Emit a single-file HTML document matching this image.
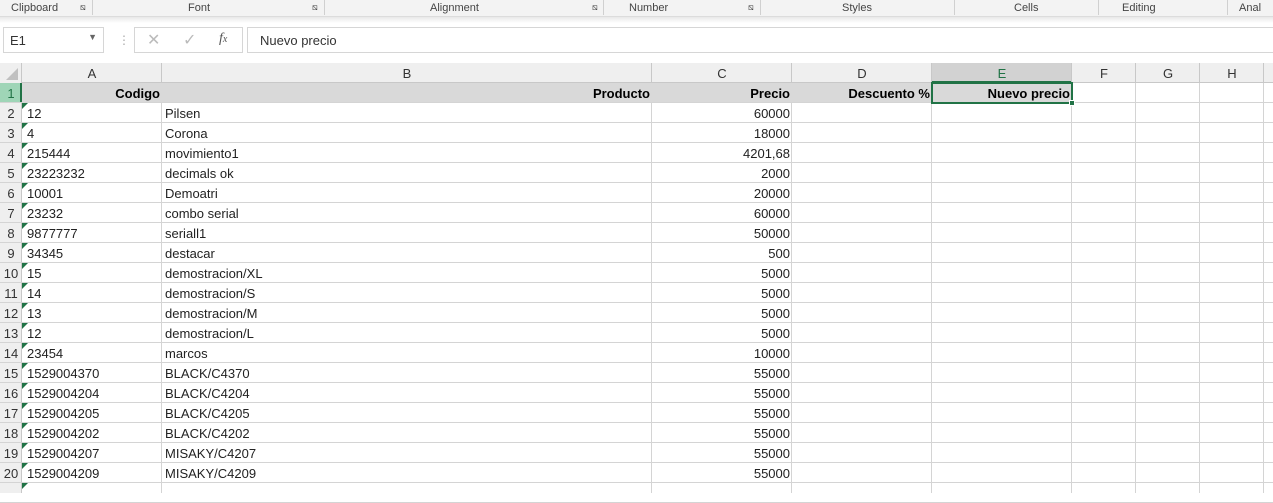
<!DOCTYPE html><html><head><style>
*{margin:0;padding:0;box-sizing:border-box}
body{width:1273px;height:489px;overflow:hidden;background:#fff;font-family:"Liberation Sans",sans-serif;position:relative}
.a{position:absolute}
.rib{left:0;top:0;width:1273px;height:17px;background:#f3f3f3;border-bottom:1px solid #dcdcdc;font-size:11px;color:#444}
.rib span{position:absolute;top:2px}
.sep{position:absolute;top:0;width:1px;height:15px;background:#d0d0d0}
.fb{left:0;top:17px;width:1273px;height:46px;background:#fff;background:linear-gradient(#e8e8e8,#fff 6px)}
.box{position:absolute;border:1px solid #d6d6d6;background:#fff;font-size:13px;color:#333}
.g{position:absolute;font-size:13px;color:#222;white-space:nowrap;overflow:hidden;line-height:20px;padding-top:1px}
</style></head><body>
<div class="a rib">
<span style="left:11px">Clipboard</span><span style="left:80px;font-size:9px">⧅</span><div class="sep" style="left:92px"></div>
<span style="left:188px">Font</span><span style="left:312px;font-size:9px">⧅</span><div class="sep" style="left:324px"></div>
<span style="left:430px">Alignment</span><span style="left:592px;font-size:9px">⧅</span><div class="sep" style="left:603px"></div>
<span style="left:629px">Number</span><span style="left:748px;font-size:9px">⧅</span><div class="sep" style="left:760px"></div>
<span style="left:842px">Styles</span><div class="sep" style="left:954px"></div>
<span style="left:1014px">Cells</span><div class="sep" style="left:1098px"></div>
<span style="left:1122px">Editing</span><div class="sep" style="left:1227px"></div>
<span style="left:1239px">Anal</span>
</div>
<div class="a fb"></div>
<div class="box" style="left:3px;top:27px;width:101px;height:26px;padding:5px 6px">E1<span style="position:absolute;right:6px;top:4px;font-size:9px;color:#666">▼</span></div>
<div class="a" style="left:118px;top:33px;font-size:12px;color:#aaa">⋮</div>
<div class="box" style="left:134px;top:27px;width:109px;height:26px;color:#bbb;font-size:16px"><span style="position:absolute;left:12px;top:2px">✕</span><span style="position:absolute;left:48px;top:2px">✓</span><span style="position:absolute;left:84px;top:3px;color:#555;font-family:'Liberation Serif',serif;font-style:italic;font-size:14px">f<small style="font-size:10px">x</small></span></div>
<div class="box" style="left:247px;top:27px;width:1030px;height:26px;padding:5px 12px">Nuevo precio</div>
<div id="grid"></div>
<script>
var cols=[[22,162,'A'],[162,652,'B'],[652,792,'C'],[792,932,'D'],[932,1072,'E'],[1072,1136,'F'],[1136,1200,'G'],[1200,1264,'H'],[1264,1340,'']];
var data=[["12","Pilsen","60000"],["4","Corona","18000"],["215444","movimiento1","4201,68"],["23223232","decimals ok","2000"],["10001","Demoatri","20000"],["23232","combo serial","60000"],["9877777","seriall1","50000"],["34345","destacar","500"],["15","demostracion/XL","5000"],["14","demostracion/S","5000"],["13","demostracion/M","5000"],["12","demostracion/L","5000"],["23454","marcos","10000"],["1529004370","BLACK/C4370","55000"],["1529004204","BLACK/C4204","55000"],["1529004205","BLACK/C4205","55000"],["1529004202","BLACK/C4202","55000"],["1529004207","MISAKY/C4207","55000"],["1529004209","MISAKY/C4209","55000"],["","",""]];
var h='';
h+='<div class="a" style="left:0;top:63px;width:1273px;height:20px;background:#efefef;border-bottom:1px solid #c8c8c8"></div>';
h+='<div class="a" style="left:0;top:63px;width:22px;height:430px;background:#efefef;border-right:1px solid #c8c8c8"></div>';
h+='<div class="a" style="left:6px;top:68px;width:0;height:0;border-left:12px solid transparent;border-bottom:12px solid #c0c0c0"></div>';
h+='<div class="a" style="left:932px;top:63px;width:140px;height:20px;background:#d2d2d2;border-bottom:2px solid #217346"></div>';
h+='<div class="a" style="left:0;top:83px;width:22px;height:20px;background:#9fd5b7;border-right:2px solid #217346"></div>';
cols.forEach(function(c){h+='<div class="a" style="left:'+(c[1]-1)+'px;top:63px;width:1px;height:20px;background:#c8c8c8"></div>';h+='<div class="g" style="left:'+c[0]+'px;top:63px;width:'+(c[1]-c[0])+'px;text-align:center;color:'+(c[2]=='E'?'#217346':'#333')+'">'+c[2]+'</div>';
h+='<div class="a" style="left:'+(c[1]-1)+'px;top:83px;width:1px;height:410px;background:#d4d4d4"></div>';});
h+='<div class="a" style="left:22px;top:83px;width:910px;height:20px;background:#d9d9d9;border-bottom:1px solid #000"></div>';
h+='<div class="a" style="left:931px;top:83px;width:142px;height:20px;background:#d9d9d9"></div>';
for(var r=0;r<21;r++){var y=83+r*20;
h+='<div class="a" style="left:0;top:'+(y+19)+'px;width:1273px;height:1px;background:#d4d4d4"></div>';
if(r<20)h+='<div class="g" style="left:0;top:'+y+'px;width:22px;text-align:center;color:'+(r==0?'#217346':'#333')+'">'+(r+1)+'</div>';}
var hdr=["Codigo","Producto","Precio","Descuento %","Nuevo precio"];
var L=[22,162,652,792,932],R=[162,652,792,932,1072];
hdr.forEach(function(t,i){h+='<div class="g" style="left:'+L[i]+'px;top:83px;width:'+(R[i]-L[i]-2)+'px;text-align:right;font-weight:bold;color:#000">'+t+'</div>';});
data.forEach(function(d,i){var y=103+i*20;
h+='<div class="a" style="left:22px;top:'+y+'px;width:0;height:0;border-top:6px solid #217346;border-right:6px solid transparent"></div>';
h+='<div class="g" style="left:27px;top:'+y+'px">'+d[0]+'</div>';
h+='<div class="g" style="left:165px;top:'+y+'px">'+d[1]+'</div>';
h+='<div class="g" style="left:652px;top:'+y+'px;width:138px;text-align:right">'+d[2]+'</div>';});
h+='<div class="a" style="left:931px;top:82px;width:142px;height:22px;border:2px solid #217346"></div>';
h+='<div class="a" style="left:1069px;top:100px;width:6px;height:6px;background:#217346;border:1px solid #fff"></div>';
document.getElementById('grid').innerHTML=h;
</script>
</body></html>
